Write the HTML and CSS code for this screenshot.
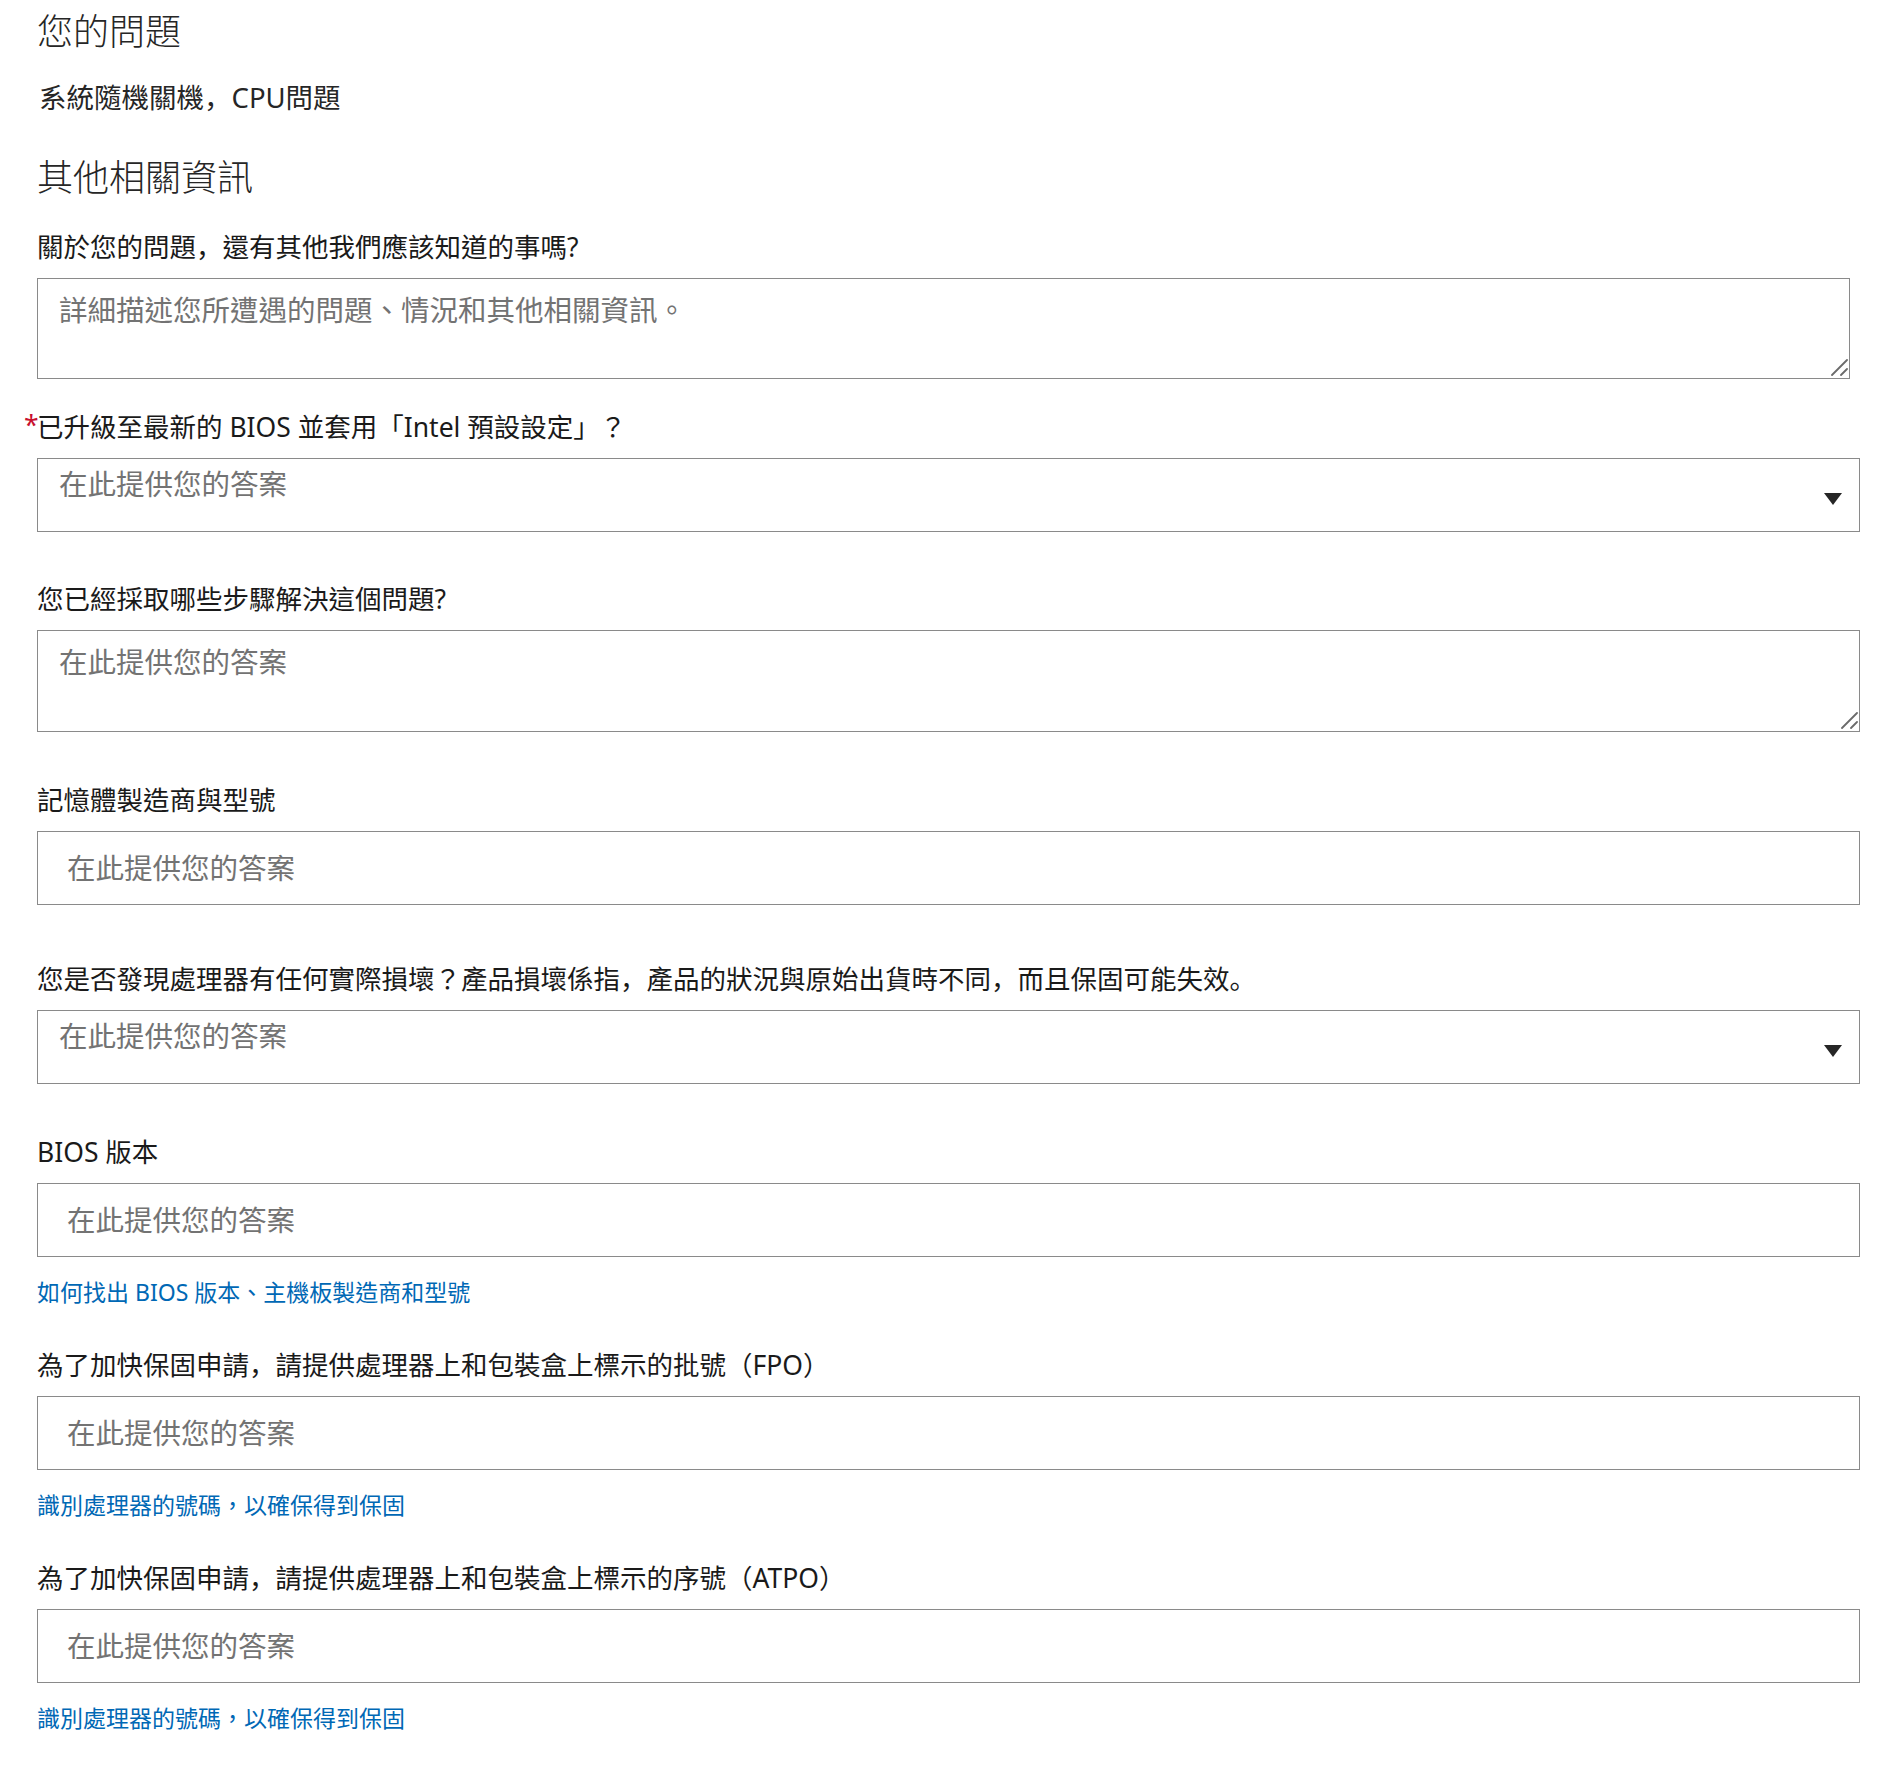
FILE: index.html
```html
<!DOCTYPE html>
<html lang="zh-Hant">
<head>
<meta charset="utf-8">
<title>其他相關資訊</title>
<link rel="stylesheet" href="styles.css">
</head>
<body>
<main class="page">
  <h1 class="title">您的問題</h1>
  <p class="summary">系統隨機關機<span class="p" lang="ja">，</span>CPU問題</p>
  <h2 class="title title--section">其他相關資訊</h2>

  <div class="group group--first">
    <label class="label" for="f1">關於您的問題<span class="p" lang="ja">，</span>還有其他我們應該知道的事嗎?</label>
    <div class="area area--narrow">
      <textarea id="f1" class="control control--area" placeholder="詳細描述您所遭遇的問題、情況和其他相關資訊。"></textarea>
      <svg class="grip" width="20" height="20" viewBox="0 0 20 20" aria-hidden="true"><path d="M4 18 L19 3 M13 18 L19 12" stroke="#6b6b6b" stroke-width="1.8" stroke-linecap="round" fill="none"/></svg>
    </div>
  </div>

  <div class="group group--tight">
    <div class="label"><span class="req">*</span>已升級至最新的 BIOS 並套用「Intel 預設設定」<span class="p" lang="ja">？</span></div>
    <div class="select" role="combobox" aria-expanded="false">
      <span class="select__value">在此提供您的答案</span>
      <svg class="select__arrow" width="18" height="12" viewBox="0 0 18 12" aria-hidden="true"><polygon points="0,0 18,0 9,12" fill="#262626"/></svg>
    </div>
  </div>

  <div class="group group--mid">
    <label class="label" for="f3">您已經採取哪些步驟解決這個問題?</label>
    <div class="area">
      <textarea id="f3" class="control control--area control--tall" placeholder="在此提供您的答案"></textarea>
      <svg class="grip" width="20" height="20" viewBox="0 0 20 20" aria-hidden="true"><path d="M4 18 L19 3 M13 18 L19 12" stroke="#6b6b6b" stroke-width="1.8" stroke-linecap="round" fill="none"/></svg>
    </div>
  </div>

  <div class="group">
    <label class="label" for="f4">記憶體製造商與型號</label>
    <input id="f4" class="control control--input" type="text" placeholder="在此提供您的答案">
  </div>

  <div class="group group--wide">
    <div class="label">您是否發現處理器有任何實際損壞<span class="p" lang="ja">？</span>產品損壞係指<span class="p" lang="ja">，</span>產品的狀況與原始出貨時不同<span class="p" lang="ja">，</span>而且保固可能失效<span class="p" lang="ja">。</span></div>
    <div class="select" role="combobox" aria-expanded="false">
      <span class="select__value">在此提供您的答案</span>
      <svg class="select__arrow" width="18" height="12" viewBox="0 0 18 12" aria-hidden="true"><polygon points="0,0 18,0 9,12" fill="#262626"/></svg>
    </div>
  </div>

  <div class="group">
    <label class="label" for="f6">BIOS 版本</label>
    <input id="f6" class="control control--input" type="text" placeholder="在此提供您的答案">
    <a class="help" href="#">如何找出 BIOS 版本、主機板製造商和型號</a>
  </div>

  <div class="group group--after-link">
    <label class="label" for="f7">為了加快保固申請<span class="p" lang="ja">，</span>請提供處理器上和包裝盒上標示的批號（FPO）</label>
    <input id="f7" class="control control--input" type="text" placeholder="在此提供您的答案">
    <a class="help" href="#">識別處理器的號碼，以確保得到保固</a>
  </div>

  <div class="group group--after-link">
    <label class="label" for="f8">為了加快保固申請<span class="p" lang="ja">，</span>請提供處理器上和包裝盒上標示的序號（ATPO）</label>
    <input id="f8" class="control control--input" type="text" placeholder="在此提供您的答案">
    <a class="help" href="#">識別處理器的號碼，以確保得到保固</a>
  </div>
</main>
</body>
</html>
```

FILE: styles.css
```css
* {
  box-sizing: border-box;
}

html, body {
  margin: 0;
  background: #ffffff;
}

body {
  font-family: "Noto Sans", "Noto Sans CJK TC", sans-serif;
  color: #1a1a1a;
}

.page {
  width: 1895px;
  padding: 10px 0 30px 37px;
}

.title {
  margin: 0;
  font-size: 36px;
  line-height: 44px;
  font-weight: 300;
  color: #262626;
}

.title--section {
  margin-top: 40px;
}

.summary {
  margin: 26px 0 0;
  padding-left: 2px;
  font-size: 27.5px;
  line-height: 36px;
  color: #262626;
}

/* low-left full-width punctuation, as in the original typeface */
.p {
  font-family: "Noto Sans CJK JP", "Noto Sans CJK TC", sans-serif;
  line-height: 1;
}

.group {
  margin-top: 51px;
}

.group--first {
  margin-top: 30px;
}

.group--tight {
  margin-top: 31px;
}

.group--mid {
  margin-top: 50px;
}

.group--wide {
  margin-top: 57px;
}

.group--after-link {
  margin-top: 41px;
}

.label {
  display: block;
  margin: 0 0 14px;
  font-size: 26.5px;
  line-height: 34px;
  font-weight: 400;
  color: #1a1a1a;
}

.req {
  display: inline-block;
  width: 13px;
  margin-left: -13px;
  color: #c8102e;
  vertical-align: 2px;
  line-height: 1;
}

.control {
  display: block;
  width: 1823px;
  margin: 0;
  border: 1px solid #8a8a8a;
  border-radius: 0;
  background: #ffffff;
  font-family: "Noto Sans", "Noto Sans CJK TC", sans-serif;
  font-size: 28.5px;
  color: #1a1a1a;
  outline: none;
}

.control::placeholder {
  color: #737373;
  opacity: 1;
}

.area {
  position: relative;
  width: 1823px;
}

.area--narrow {
  width: 1813px;
}

.control--area {
  width: 100%;
  height: 101px;
  padding: 12px 21px;
  line-height: 38px;
  resize: none;
}

.control--tall {
  height: 102px;
}

.grip {
  position: absolute;
  right: 2px;
  bottom: 2px;
  pointer-events: none;
}

.control--input {
  height: 74px;
  padding: 0 20px 0 29px;
  line-height: 38px;
}

.select {
  display: flex;
  justify-content: space-between;
  align-items: flex-start;
  width: 1823px;
  height: 74px;
  padding: 6px 17px 0 21px;
  border: 1px solid #8a8a8a;
  background: #ffffff;
}

.select__value {
  font-size: 28.5px;
  line-height: 38px;
  color: #737373;
}

.select__arrow {
  display: block;
  margin-top: 28px;
  flex: none;
}

.help {
  display: block;
  margin-top: 20px;
  font-size: 23px;
  line-height: 30px;
  color: #0068b5;
  text-decoration: none;
}
```
